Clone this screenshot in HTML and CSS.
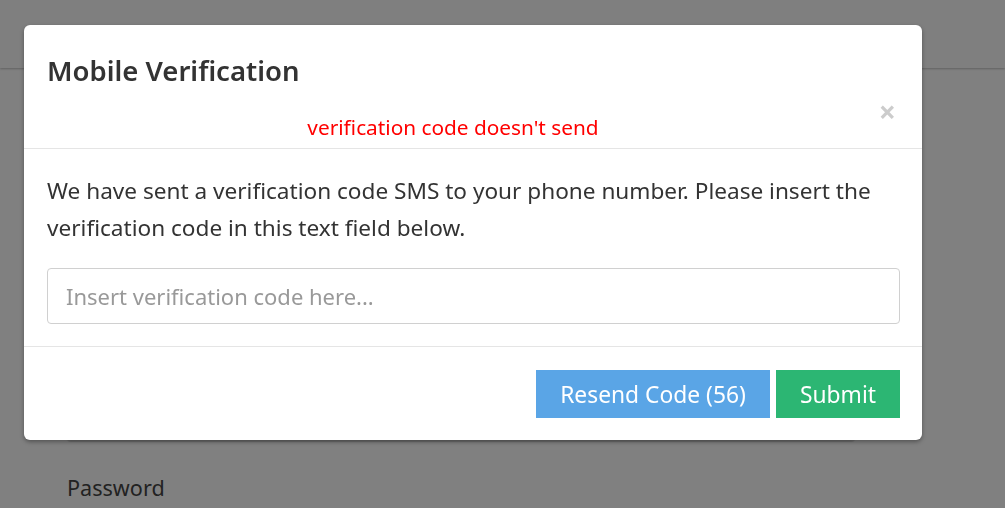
FILE: index.html
```html
<!DOCTYPE html>
<html>
<head>
<meta charset="utf-8">
<link rel="stylesheet" href="styles.css">
</head>
<body>
<div class="page">
  <div class="navbar"></div>
  <div class="form">
    <div class="field-box"></div>
    <div class="label">Password</div>
  </div>
</div>
<div class="modal">
  <div class="modal-header">
    <h4 class="modal-title">Mobile Verification</h4>
    <div class="modal-error">verification code doesn't send</div>
    <span class="close">×</span>
  </div>
  <div class="modal-body">
    <p class="intro">We have sent a verification code SMS to your phone number. Please insert the verification code in this text field below.</p>
    <input class="code-input" type="text" placeholder="Insert verification code here...">
  </div>
  <div class="modal-footer">
    <button class="btn btn-resend">Resend Code (56)</button>
    <button class="btn btn-submit">Submit</button>
  </div>
</div>
</body>
</html>
```

FILE: styles.css
```css
html, body {
  margin: 0;
  padding: 0;
  height: 100%;
}
body {
  background: #808080;
  font-family: "Noto Sans", "Open Sans", sans-serif;
  color: #333;
  overflow: hidden;
}
.page {
  display: flex;
  flex-direction: column;
}
.navbar {
  height: 68px;
  background: #7f7f7f;
  box-shadow: 0 1px 2px rgba(0,0,0,0.25);
}
.form {
  padding: 0 150px 0 67px;
  display: flex;
  flex-direction: column;
}
.field-box {
  height: 372px;
  border: 1px solid #6e6e6e;
  border-top: none;
  border-radius: 0 0 4px 4px;
  box-shadow: 0 1px 1px rgba(0,0,0,0.15);
}
.label {
  margin-top: 33px;
  font-size: 21.6px;
  line-height: 28px;
  color: #222;
}
.modal {
  position: fixed;
  top: 25px;
  left: 24px;
  width: 898px;
  background: #fff;
  border-radius: 6px;
  box-shadow: 0 2px 4px rgba(0,0,0,0.35);
}
.modal-header {
  position: relative;
  padding: 27px 23px 10px;
  border-bottom: 1px solid #e5e5e5;
}
.modal-title {
  margin: 0;
  font-size: 27.5px;
  line-height: 38px;
  font-weight: 600;
  color: #333;
}
.modal-error {
  margin-top: 26px;
  padding-right: 40px;
  height: 22px;
  line-height: 22px;
  text-align: center;
  color: #ff0000;
  font-size: 20.8px;
}
.close {
  position: absolute;
  right: 26px;
  top: 70px;
  font-size: 30px;
  line-height: 34px;
  font-weight: 700;
  color: #cccccc;
}
.modal-body {
  padding: 23px 22px 22px 23px;
}
.intro {
  margin: 0 0 22px;
  font-size: 22.6px;
  line-height: 37px;
  color: #333;
}
.code-input {
  display: block;
  box-sizing: border-box;
  width: 100%;
  height: 56px;
  padding: 0 18px;
  border: 1px solid #d0d0d0;
  border-radius: 4px;
  font-family: inherit;
  font-size: 22px;
  color: #333;
  outline: none;
}
.code-input::placeholder {
  color: #999;
}
.modal-footer {
  display: flex;
  justify-content: flex-end;
  gap: 6px;
  padding: 23px 22px 22px;
  border-top: 1px solid #e5e5e5;
}
.btn {
  height: 48px;
  border: none;
  border-radius: 0;
  font-family: inherit;
  font-size: 22.8px;
  color: #fff;
  padding: 0;
}
.btn-resend {
  width: 234px;
  background: #5aa5e6;
}
.btn-submit {
  width: 124px;
  background: #2cb673;
}
```
